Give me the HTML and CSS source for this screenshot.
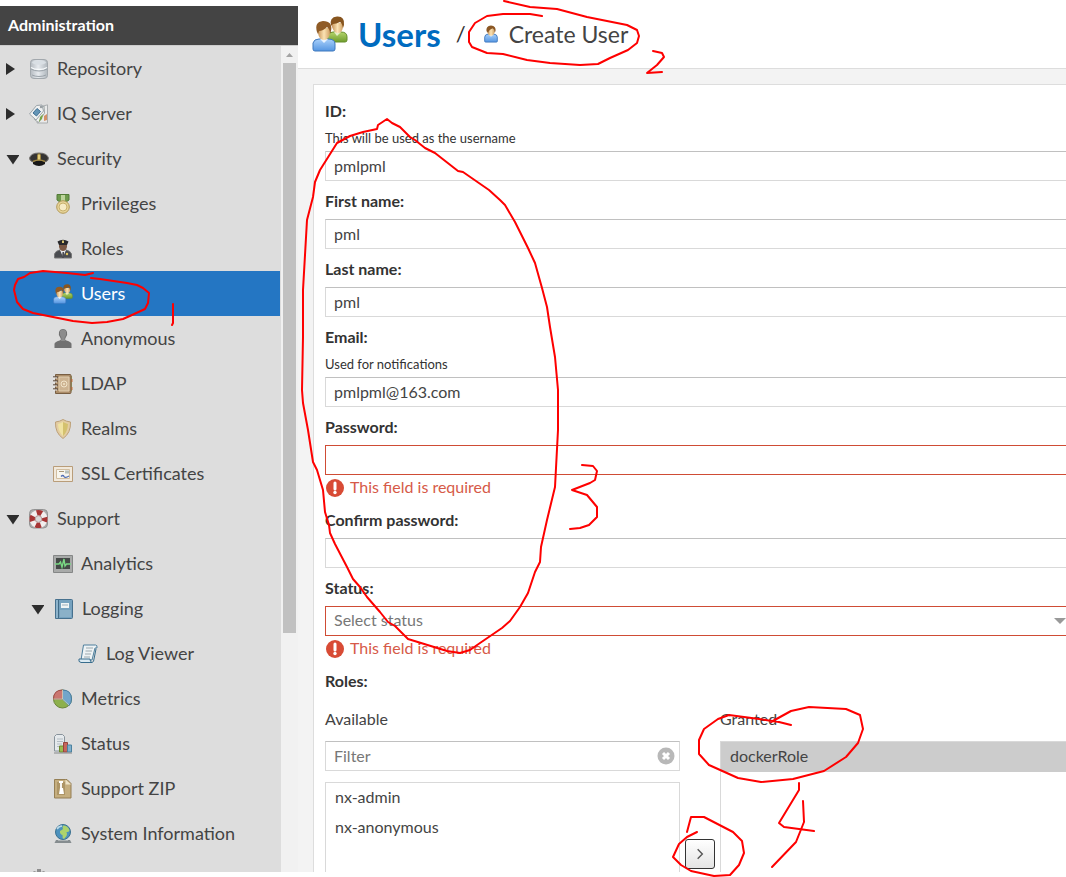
FILE: index.html
```html
<!DOCTYPE html>
<html lang="en">
<head>
<meta charset="utf-8">
<title>Create User</title>
<link rel="stylesheet" href="styles.css">
</head>
<body>
<svg class="defs" aria-hidden="true">
  <defs>
    <linearGradient id="skin" x1="0" x2="1"><stop offset="0" stop-color="#c9965a"/><stop offset=".5" stop-color="#fbe3b4"/><stop offset="1" stop-color="#cf9f63"/></linearGradient>
    <linearGradient id="blueShirt" x1="0" x2="0" y1="0" y2="1"><stop offset="0" stop-color="#a9d0fa"/><stop offset="1" stop-color="#5596e2"/></linearGradient>
    <linearGradient id="greenShirt" x1="0" x2="0" y1="0" y2="1"><stop offset="0" stop-color="#b4d56c"/><stop offset="1" stop-color="#6f9c2c"/></linearGradient>
    <linearGradient id="steel" x1="0" x2="1"><stop offset="0" stop-color="#b4bac0"/><stop offset=".45" stop-color="#e6eaee"/><stop offset="1" stop-color="#b0b7bd"/></linearGradient>
  </defs>
  <symbol id="i-user" viewBox="0 0 20 20">
    <path d="M3 18v-4.500q0-3 4-3.500h6q4 .5 4 3.500V18q0 1-1 1H4q-1 0-1-1z" fill="url(#blueShirt)" stroke="#3f78bd"/>
    <path d="M7 10.500 10 13l3-2.500z" fill="#e8f3ff"/>
    <path d="M6 4h8v4q-1 4-4 4T6 8z" fill="url(#skin)"/>
    <path d="M5 7Q4 1 10 .5 16 1 15 7l-1 1q0-3-2-4-4 1-5 4.500z" fill="#8b5724"/>
  </symbol>
  <symbol id="i-users" viewBox="0 0 36 36">
    <path d="M15 25v-5q1-4 6-4h8q6 0 6 5v3q0 2-2 2H15z" fill="url(#greenShirt)" stroke="#668e2c"/>
    <path d="m22 16 3 4 4-4z" fill="#e5efc8"/>
    <path d="M20 7h11v4q-1 6-5 6t-6-6z" fill="url(#skin)"/>
    <path d="M19 10Q17 1 25 .5 33 0 32 9l-1 3q-1-5-3-6-4 2-7 2z" fill="#87551f"/>
    <path d="M1 33v-6q1-4 6-4h9q7 0 7 5v5q0 2-2 2H3q-2 0-2-2z" fill="url(#blueShirt)" stroke="#3f78bd"/>
    <path d="m8 23 4 4 4-4z" fill="#eaf4ff"/>
    <path d="M6 12h12v5q-1 7-6 7t-6-7z" fill="url(#skin)"/>
    <path d="M5 16Q2 6 11 5q10 0 8 10l-1 3q0-5-3-7-4 4-8 4l-1 3z" fill="#8f5b26"/>
  </symbol>
  <symbol id="i-db" viewBox="0 0 20 20">
    <path d="M1.500 3.500Q1.500.5 5 .5h10q3.500 0 3.500 3v13q0 3-3.500 3H5q-3.500 0-3.500-3z" fill="url(#steel)" stroke="#a2a8ad"/>
    <ellipse cx="10" cy="3.500" rx="7" ry="2.200" fill="#d9dfe4"/>
    <path d="M2 8.500q3 2 8 2t8-2" fill="none" stroke="#f8fbfc" stroke-width="1.500"/>
    <path d="M2 10q3 2 8 2t8-2M3 16q3 1.500 7 1.500t7-1.500" fill="none" stroke="#9aa2a9"/>
  </symbol>
  <symbol id="i-iq" viewBox="0 0 20 20">
    <path d="M11 3 18.500.800V19H8z" fill="#e9eaea" stroke="#a9adaf"/>
    <path d="m15 12 3-2v6l-3 1z" fill="#d49067"/>
    <path d="m9 6 6-4 .5 7-6 9.500-4-3z" fill="#f1f2f0" stroke="#9fa6a6"/>
    <path d="m11 13 3-3-1 5-3 3z" fill="#79a547"/>
    <path d="m.5 10 7-8.500L13 1l1.500 6L7 16z" fill="#f0f1f1" stroke="#9aa3a8"/>
    <path d="m4 9 4-4.500 3.500 3L7.500 12z" fill="#6495b6" stroke="#3e6f92"/>
    <circle cx="12" cy="3" r="1.200" fill="#989ea2"/>
  </symbol>
  <symbol id="i-cap" viewBox="0 0 20 20">
    <path d="M.5 9Q2 4 10 4t9.500 5q0 3-3.500 4H4Q.5 12 .5 9z" fill="#353433" stroke="#797673"/>
    <path d="M4 12q6-3 12 0v3q-6 4-12 0z" fill="#171717"/>
    <path d="M4 12.500q6-3 12 0" fill="none" stroke="#a38a45" stroke-width="1.500"/>
    <path d="M8.500 6 10 4.500 11.500 6v5h-3z" fill="#e3ce7b" stroke="#9a813c"/>
  </symbol>
  <symbol id="i-medal" viewBox="0 0 20 20">
    <path d="M4 .5h12V6l-3 2H7L4 6z" fill="#6d9a4c" stroke="#527b37"/>
    <path d="M8 1h4v6H8z" fill="#bcd49b"/>
    <circle cx="10" cy="13" r="6.300" fill="#e7d49a" stroke="#b39a59"/>
    <circle cx="10" cy="13" r="4" fill="#f6ebc5" stroke="#c8b06c"/>
  </symbol>
  <symbol id="i-officer" viewBox="0 0 20 20">
    <path d="M1.500 19v-4q1-3 5-4h7q4 1 5 4v4z" fill="#4a4c50" stroke="#777"/>
    <path d="m7 11 3 7 3-7z" fill="#e8eaec"/><path d="M9.500 13h1.500v6H9z" fill="#4b4c51"/>
    <path d="M6 5h8v3q-1 4-4 4T6 8z" fill="#7b5843"/>
    <path d="M4.500 2.500Q10-1 15.500 2.500L14 6H6z" fill="#29292b"/>
    <path d="M9 1.500h2v2.500H9z" fill="#d8c471"/><circle cx="14" cy="15" r="1.200" fill="#e3c65e"/>
  </symbol>
  <symbol id="i-anon" viewBox="0 0 20 20">
    <path d="M1.500 19v-4q0-2 5-3.500 2-.5 1-2.500Q5 6 6 3q1-3 4-3t4 3q1 3-1.500 6-1 2 1 2.500 5 1.500 5 3.500v4z" fill="#707070"/>
    <path d="M7 2q3-3 6 0v4l-1.500 3L12 12H8l.5-3L7 6z" fill="#8c8c8c"/>
  </symbol>
  <symbol id="i-book" viewBox="0 0 20 20">
    <path d="M15 2h4v15l-4 2z" fill="#9aa267"/><path d="M18 5h1.500v3H18zM18 13h1.500v3H18z" fill="#d27a48"/>
    <path d="M2.500.5H17q1 0 1 1v17q0 1-1 1H2.500z" fill="#ac8d69" stroke="#795f43"/>
    <path d="M6 3h10v14H6z" fill="#cdb391" stroke="#e1ceb1"/>
    <circle cx="11" cy="10" r="3" fill="none" stroke="#f1e4ca"/><circle cx="11" cy="10" r="1" fill="#f1e4ca"/>
    <path d="M0 3h5M0 7h5M0 11h5M0 15h5" stroke="#665445" stroke-width="1.500"/><path d="M0 4h4M0 8h4M0 12h4M0 16h4" stroke="#eee"/>
  </symbol>
  <symbol id="i-shield" viewBox="0 0 20 20">
    <path d="M10 .5q3 2 7.500 2.500.5 11-7.500 16.500Q2 14 2.500 3 7 2.500 10 .5z" fill="#e3cda3" stroke="#bda077"/>
    <path d="M10 3q3 1.500 5 2-.5 8-5 12Z" fill="#d4c16e"/><path d="M10 3Q7 4.500 5 5q.5 8 5 12z" fill="#f0e3a2"/>
  </symbol>
  <symbol id="i-cert" viewBox="0 0 20 20">
    <path d="M.5 2.500h19v15H.5z" fill="#f1e9dc" stroke="#b99d79"/>
    <path d="M3.500 5.500h13v9h-13z" fill="#f8f6ee" stroke="#d2bea0"/>
    <path d="M6 7.500h5" stroke="#a79779"/><path d="M8 12.500q2-2 3 0t5-.5" fill="none" stroke="#526fb3" stroke-width="1.300"/>
    <path d="M12 6.500h4v3h-4z" fill="#b7c1bc"/>
  </symbol>
  <symbol id="i-ring" viewBox="0 0 20 20">
    <rect x=".5" y=".5" width="18" height="18.500" rx="4" fill="#adadad" stroke="#929292"/>
    <circle cx="9.500" cy="10" r="6.300" fill="none" stroke="#f2eeee" stroke-width="5.500"/>
    <circle cx="9.500" cy="10" r="6.300" fill="none" stroke="#a73535" stroke-width="5.500" stroke-dasharray="5.200 4.700" stroke-dashoffset="2.600"/>
    <circle cx="9.500" cy="10" r="3.300" fill="#d9d9d9" stroke="#ba9c9c"/>
  </symbol>
  <symbol id="i-pulse" viewBox="0 0 20 20">
    <path d="M.5 1.500h19v17H.5z" fill="#a8aaa9" stroke="#858787"/><path d="M3 4h14v11H3z" fill="#454a48"/>
    <path d="M2 10h4l1.500-2L9 13l2-8 1 7 1.500-2H18" fill="none" stroke="#7ad884" stroke-width="1.400"/>
  </symbol>
  <symbol id="i-log" viewBox="0 0 20 20">
    <path d="M1.500.5h16q1 0 1 1v17q0 1-1 1h-16z" fill="#76a2bf" stroke="#47718e"/>
    <path d="M4.500 1v18" stroke="#416b87"/><path d="M3 1v18" stroke="#a3c4d8"/>
    <path d="M7 4h8v5H7z" fill="#eff4f5"/><path d="M8 6h6" stroke="#9caeba"/><path d="M6 11h11v7H6z" fill="#8bb1c8"/>
  </symbol>
  <symbol id="i-scroll" viewBox="0 0 20 20">
    <path d="M5.500 1h12q2 0 1.500 3h-2l-3 12H3z" fill="#eef3f5" stroke="#4d7f9d"/>
    <path d="M1 15h11q0 3 2 3.500H3Q0 18 1 15z" fill="#dbeaf2" stroke="#386d8d"/>
    <path d="M14 18.500q2-.5 2-3.500l2-10" fill="none" stroke="#386d8d"/>
    <path d="M8 4h7M7.500 7h6.500M7 10h6M6 13h6" stroke="#9ba8ae"/>
  </symbol>
  <symbol id="i-pie" viewBox="0 0 20 20">
    <circle cx="9.500" cy="10" r="9" fill="#8db04c" stroke="#688437"/>
    <path d="M9.500 10V1q9 0 9 9 0 4-2.500 6.500z" fill="#72a5ca" stroke="#477da4"/>
    <path d="M9.500 10H.5q0-9 9-9z" fill="#ca7670" stroke="#a24c49"/>
    <path d="M9.500 1v9L16 16M.5 10h9" fill="none" stroke="#d5dcc8" stroke-width=".8"/>
  </symbol>
  <symbol id="i-status" viewBox="0 0 20 20">
    <path d="M3.500.5h6l2 2V17h-10V2.500z" fill="#e5e9ec" stroke="#88939b"/><path d="M4 5h6M4 7.500h6M4 10h5M4 12.500h3" stroke="#b4bdc3"/>
    <path d="M6.500 12h4v6h-4z" fill="#9abb50" stroke="#6d8b2c"/><path d="M10.500 8.500h4V18h-4z" fill="#c7665c" stroke="#95443e"/><path d="M14.500 11h4v7h-4z" fill="#80b0cd" stroke="#4b819f"/><path d="M1 19h18" stroke="#85888a"/>
  </symbol>
  <symbol id="i-zip" viewBox="0 0 20 20">
    <path d="M1.500.5H14l4 4v14.500H1.500z" fill="#c5ae7f" stroke="#957f54"/><path d="M4 3h8v13H4z" fill="#ad9566"/>
    <path d="M12.500.500v5H18z" fill="#eee4c9"/><path d="M6 3h4M8 4v8" stroke="#fff" stroke-width="1.800"/><path d="M7 9h3l1 6H6z" fill="#fff"/>
  </symbol>
  <symbol id="i-globe" viewBox="0 0 20 20">
    <path d="M3 16h14l1.500 3h-17z" fill="#858c8f"/><path d="M5 16h10" stroke="#d5d9db"/>
    <circle cx="10" cy="8" r="7.500" fill="#4c91bd" stroke="#3c718f"/>
    <path d="M10 1.500q5 0 6.500 5-1 2-3 1.500 1 2 0 4l-2.500 3q-2-1-1.500-4-3-1-2.500-4 2-1 3-2-1-2 0-3.500z" fill="#add36c"/><path d="M4 5q2-3 5-3" fill="none" stroke="#bddbe9" stroke-width="1.500"/>
  </symbol>
  <symbol id="i-gear" viewBox="0 0 20 20">
    <path d="M8 0h4v3l3-1 3 3-2 3h3v4h-3l2 3-3 3-3-2v4H8v-4l-3 2-3-3 2-3H1V8h3L2 5l3-3 3 1z" fill="#8e8e8e"/><circle cx="10" cy="10" r="3" fill="#ddd"/>
  </symbol>
  <symbol id="i-right" viewBox="0 0 14 14"><path d="M1 1v12l9-6z" fill="#2d2d2d"/></symbol>
  <symbol id="i-down" viewBox="0 0 14 14"><path d="M1.500 3H14.500L8 12.500z" fill="#2d2d2d"/></symbol>
  <symbol id="i-error" viewBox="0 0 18 18"><circle cx="9" cy="9" r="9" fill="#d84b35"/><path d="M9 4v6" stroke="#fff" stroke-width="3" stroke-linecap="round"/><circle cx="9" cy="13.500" r="1.700" fill="#fff"/></symbol>
</svg>

<div class="app">
  <aside class="sidebar">
    <h2 class="sidebar-title">Administration</h2>
    <div class="sidebar-body">
      <nav class="tree" aria-label="Administration">
        <a class="node" href="#"><svg class="expander"><use href="#i-right"/></svg><svg class="icon"><use href="#i-db"/></svg>Repository</a>
        <a class="node" href="#"><svg class="expander"><use href="#i-right"/></svg><svg class="icon"><use href="#i-iq"/></svg>IQ Server</a>
        <a class="node" href="#"><svg class="expander"><use href="#i-down"/></svg><svg class="icon"><use href="#i-cap"/></svg>Security</a>
        <a class="node level-2" href="#"><svg class="icon"><use href="#i-medal"/></svg>Privileges</a>
        <a class="node level-2" href="#"><svg class="icon"><use href="#i-officer"/></svg>Roles</a>
        <a class="node level-2 current" href="#" aria-current="page"><svg class="icon"><use href="#i-users"/></svg>Users</a>
        <a class="node level-2" href="#"><svg class="icon"><use href="#i-anon"/></svg>Anonymous</a>
        <a class="node level-2" href="#"><svg class="icon"><use href="#i-book"/></svg>LDAP</a>
        <a class="node level-2" href="#"><svg class="icon"><use href="#i-shield"/></svg>Realms</a>
        <a class="node level-2" href="#"><svg class="icon"><use href="#i-cert"/></svg>SSL Certificates</a>
        <a class="node" href="#"><svg class="expander"><use href="#i-down"/></svg><svg class="icon"><use href="#i-ring"/></svg>Support</a>
        <a class="node level-2" href="#"><svg class="icon"><use href="#i-pulse"/></svg>Analytics</a>
        <a class="node nested" href="#"><svg class="expander"><use href="#i-down"/></svg><svg class="icon"><use href="#i-log"/></svg>Logging</a>
        <a class="node level-3" href="#"><svg class="icon"><use href="#i-scroll"/></svg>Log Viewer</a>
        <a class="node level-2" href="#"><svg class="icon"><use href="#i-pie"/></svg>Metrics</a>
        <a class="node level-2" href="#"><svg class="icon"><use href="#i-status"/></svg>Status</a>
        <a class="node level-2" href="#"><svg class="icon"><use href="#i-zip"/></svg>Support ZIP</a>
        <a class="node level-2" href="#"><svg class="icon"><use href="#i-globe"/></svg>System Information</a>
        <a class="node level-1" href="#" aria-label="System"><svg class="icon"><use href="#i-gear"/></svg></a>
      </nav>
      <div class="scrollbar" aria-hidden="true">
        <svg class="scroll-up" viewBox="0 0 17 17"><path d="m5 11 3.500-4 3.500 4z" fill="#a3a3a3"/></svg>
        <div class="thumb"></div>
      </div>
    </div>
  </aside>

  <main class="main">
    <header class="page-header">
      <svg class="page-icon" aria-hidden="true"><use href="#i-users"/></svg>
      <h1 class="page-title">Users</h1>
      <span class="slash">/</span>
      <svg class="crumb-icon" aria-hidden="true"><use href="#i-user"/></svg>
      <span class="crumb">Create User</span>
    </header>
    <form class="panel">
      <div class="field">
        <label class="label" for="uid">ID:</label>
        <p class="help">This will be used as the username</p>
        <input class="input" id="uid" type="text" value="pmlpml">
      </div>
      <div class="field">
        <label class="label" for="first">First name:</label>
        <input class="input" id="first" type="text" value="pml">
      </div>
      <div class="field">
        <label class="label" for="last">Last name:</label>
        <input class="input" id="last" type="text" value="pml">
      </div>
      <div class="field">
        <label class="label" for="email">Email:</label>
        <p class="help">Used for notifications</p>
        <input class="input" id="email" type="text" value="pmlpml@163.com">
      </div>
      <div class="field">
        <label class="label" for="password">Password:</label>
        <input class="input invalid" id="password" type="password">
        <p class="error"><svg class="error-icon"><use href="#i-error"/></svg>This field is required</p>
      </div>
      <div class="field">
        <label class="label" for="confirm">Confirm password:</label>
        <input class="input" id="confirm" type="password">
      </div>
      <div class="field">
        <label class="label" for="status">Status:</label>
        <div class="select-wrap">
          <select class="input invalid select" id="status"><option>Select status</option></select>
        </div>
        <p class="error"><svg class="error-icon"><use href="#i-error"/></svg>This field is required</p>
      </div>
      <div class="roles">
        <span class="label">Roles:</span>
        <div class="picker">
          <div class="picker-column">
            <label class="picker-title" for="filter">Available</label>
            <div class="filter">
              <input class="input" id="filter" type="text" placeholder="Filter">
              <button class="clear" type="button" aria-label="Clear filter"><svg viewBox="0 0 18 18"><circle cx="9" cy="9" r="8.500" fill="#b8b8b8"/><path d="m6 6 6 6m0-6-6 6" stroke="#fff" stroke-width="3"/></svg></button>
            </div>
            <ul class="list" role="listbox" aria-label="Available roles">
              <li class="option" role="option">nx-admin</li>
              <li class="option" role="option">nx-anonymous</li>
            </ul>
          </div>
          <div class="picker-actions">
            <button class="move" type="button" aria-label="Grant role"><svg viewBox="0 0 12 12"><path d="m4 2 4 4-4 4" fill="none" stroke="#555" stroke-width="1.200"/></svg></button>
          </div>
          <div class="picker-column">
            <span class="picker-title">Granted</span>
            <ul class="list" role="listbox" aria-label="Granted roles">
              <li class="option selected" role="option" aria-selected="true">dockerRole</li>
            </ul>
          </div>
        </div>
      </div>
    </form>
  </main>
</div>

<svg class="ink" viewBox="0 0 1066 877" aria-hidden="true">
  <path d="M93 273 85 275 67 273 43 271 30 273 24 277 18 279 15 285 14 290 17 302 23 309 33 313 53 317 73 321 92 323 107 322 123 319 132 315 145 309 148 303 149 293 143 288 137 285 127 283 100 279 91 278"/>
  <path d="M173 304V323L172 325"/>
  <path d="M542 16 530 14 503 14 487 16 475 23 469 32 469 42 472 47 487 53 503 54 527 60 550 63 580 65 598 64 610 58 628 50 637 43 639 36 637 30 627 25 607 21 587 17 557 9 530 7 504 1"/>
  <path d="M653 51 662 53 664 57 657 65 647 73 662 72"/>
  <path d="M377 129 378 125 387 119 392 123 400 127 410 137 415 140 425 148 435 153 458 171 463 172 489 190 500 200 505 205 515 222 528 248 535 263 542 288 547 307 550 327 555 357 558 390 558 430 555 487 547 520 541 547 540 562 535 572 528 593 520 607 510 621 502 628 480 643 470 650 460 653 447 651 408 639 395 626 388 622 380 612 367 597 360 587 353 579 347 567 335 544 330 533 329 525 325 512 323 490 317 470 313 462 308 430 303 403 302 390 303 337 303 290 307 220 313 197 315 182 320 170 337 143 350 136 363 132Z"/>
  <path d="M582 465 593 466 597 471 595 480 590 483 572 490 587 495 597 507 597 517 589 525 580 528 570 529"/>
  <path d="M791 725 779 722 759 719 729 715 718 719 704 729 699 740 699 754 709 765 738 778 761 782 793 779 824 771 846 757 858 743 863 729 860 715 846 709 809 707 791 711 771 722"/>
  <path d="M799 783V790L779 823 784 827 814 831M803 801 804 822 796 842 772 867"/>
  <path d="M687 832 691 817 704 817 733 832 742 841 744 853 739 865 730 875 714 876 691 871 681 865 673 857 679 844 687 837 697 832"/>
</svg>
</body>
</html>
```

FILE: styles.css
```css
* { box-sizing: border-box; }

body {
  margin: 0;
  background: #fff;
  color: #333;
  font-family: Lato, "Open Sans", sans-serif;
  font-size: 16px;
  font-weight: 400;
  line-height: 22px;
  overflow: hidden;
}

h1, h2, p, ul { margin: 0; padding: 0; }

.defs { position: absolute; width: 0; height: 0; }

.app {
  display: flex;
  height: 100vh;
  padding: 6px 0 5px;
}

.sidebar {
  flex: 0 0 298px;
  display: flex;
  flex-direction: column;
}

.sidebar-title {
  padding: 7px 8px 9px;
  border-bottom: 1px solid #ccc;
  background: #444;
  color: #fff;
  font-size: 16px;
  line-height: 23px;
}

.sidebar-body {
  flex: 1;
  display: flex;
  min-height: 0;
}

.tree {
  flex: 1;
  overflow: hidden;
  background: #ddd;
  font-size: 18px;
}

.node {
  display: flex;
  align-items: center;
  height: 45px;
  padding: 0 0 2px 5px;
  border-right: 1px solid #ddd;
  color: #444;
  text-decoration: none;
}

.level-1 { padding-left: 29px; }
.level-2 { padding-left: 53px; }
.level-3 { padding-left: 78px; }
.nested { padding-left: 30px; }

.current {
  background: #2476c3;
  color: #fff;
}

.expander {
  width: 14px;
  height: 14px;
  margin: 2px 10px 0 0;
}

.icon {
  width: 20px;
  height: 20px;
  margin: 2px 8px 0 0;
}

.scrollbar {
  width: 17px;
  background: #f1f1f1;
}

.scroll-up {
  display: block;
  width: 17px;
  height: 17px;
}

.thumb {
  height: 69%;
  margin: 0 2px;
  background: #c1c1c1;
}

.main {
  flex: 1;
  display: flex;
  flex-direction: column;
  min-width: 0;
  overflow: hidden;
  background: #f3f3f3;
}

.page-header {
  display: flex;
  align-items: center;
  flex: 0 0 63px;
  padding: 0 0 6px 14px;
  border-bottom: 1px solid #ddd;
  background: #fff;
}

.page-icon {
  width: 36px;
  height: 36px;
  margin-right: 10px;
}

.page-title {
  color: #006bbf;
  font-size: 33px;
  font-weight: 700;
  line-height: 40px;
}

.slash {
  margin: 0 16px 0 15px;
  font-size: 22px;
}

.crumb-icon {
  width: 18px;
  height: 18px;
  margin-right: 9px;
}

.crumb {
  color: #444;
  font-size: 23px;
}

.panel {
  flex: 1 0 auto;
  margin: 15px -21px 0 15px;
  padding: 16px 11px;
  border: 1px solid #ddd;
  background: #fff;
}

.field { margin-bottom: 10px; }

.label {
  display: block;
  margin-bottom: 8px;
  font-size: 16px;
  font-weight: 700;
  line-height: 20px;
}

.help {
  padding-bottom: 3px;
  font-size: 13px;
  line-height: 19px;
}

.input {
  display: block;
  width: 100%;
  height: 30px;
  padding: 0 8px 2px;
  border: 1px solid #d9d9d9;
  border-top-color: #c0c0c0;
  border-radius: 0;
  background: #fff;
  color: #444;
  font: inherit;
  outline: 0;
}

.input::placeholder { color: #777; }

.input.invalid { border-color: #cf4c35; }

.select-wrap { position: relative; }

.select-wrap::after {
  content: "";
  position: absolute;
  top: 12px;
  right: 9px;
  border: 6px solid transparent;
  border-top-color: #999;
  border-bottom: 0;
}

.input.select {
  appearance: none;
  color: #777;
}

.error {
  display: flex;
  align-items: center;
  padding-bottom: 2px;
  color: #d65a48;
  line-height: 23px;
}

.error-icon {
  width: 18px;
  height: 18px;
  margin: 2px 6px 0 1px;
}

.picker {
  display: flex;
  padding-top: 9px;
}

.picker-column {
  flex: 1 1 0;
  min-width: 0;
}

.picker-title {
  display: block;
  margin-bottom: 11px;
  color: #444;
}

.filter {
  position: relative;
  margin-bottom: 11px;
}

.clear {
  position: absolute;
  top: 6px;
  right: 5px;
  width: 18px;
  height: 18px;
  padding: 0;
  border: 0;
  background: none;
}

.clear svg { display: block; }

.list {
  min-height: 200px;
  border: 1px solid #d9d9d9;
  list-style: none;
}

.option {
  padding: 0 9px 2px;
  color: #444;
  line-height: 28px;
}

.selected { background: #ccc; }

.picker-actions {
  flex: 0 0 40px;
  padding: 131px 5px 0;
}

.move {
  display: grid;
  place-items: center;
  width: 30px;
  height: 30px;
  padding: 0;
  border: 1px solid #333;
  border-radius: 3px;
  background: linear-gradient(#fff, #e4e4e4);
}

.move svg {
  width: 14px;
  height: 14px;
}

.ink {
  position: absolute;
  top: 0;
  left: 0;
  width: 1066px;
  height: 877px;
  fill: none;
  stroke: #fe0000;
  stroke-width: 2;
  stroke-linecap: round;
  stroke-linejoin: round;
  pointer-events: none;
}
```
